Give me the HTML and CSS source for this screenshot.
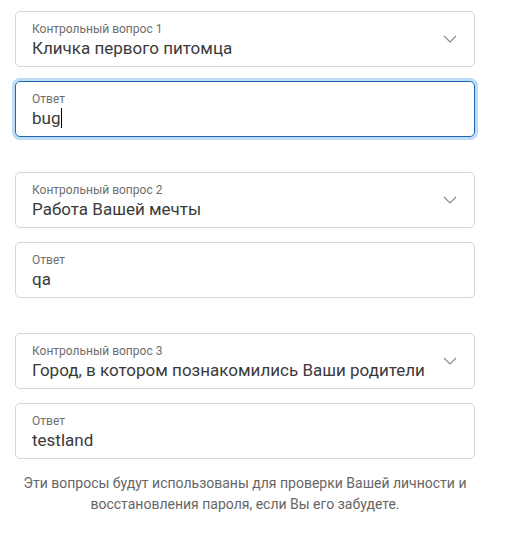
FILE: index.html
```html
<!DOCTYPE html>
<html lang="ru">
<head>
    <meta charset="UTF-8">
    <title>Контрольные вопросы</title>
    <link rel="stylesheet" href="styles.css">
</head>
<body>

<div class="form">
    <div class="group">
        <div class="field select">
            <div class="text">
                <div class="label">Контрольный вопрос 1</div>
                <div class="value">Кличка первого питомца</div>
            </div>
            <svg class="chevron" width="14" height="8" viewBox="0 0 14 8">
                <path d="M1 1 L7 7 L13 1" fill="none" stroke="#8a8a8a" stroke-width="1.2"/>
            </svg>
        </div>
        <div class="field focused">
            <div class="text">
                <div class="label">Ответ</div>
                <div class="value">bug<span class="caret"></span></div>
            </div>
        </div>
    </div>

    <div class="group">
        <div class="field select">
            <div class="text">
                <div class="label">Контрольный вопрос 2</div>
                <div class="value">Работа Вашей мечты</div>
            </div>
            <svg class="chevron" width="14" height="8" viewBox="0 0 14 8">
                <path d="M1 1 L7 7 L13 1" fill="none" stroke="#8a8a8a" stroke-width="1.2"/>
            </svg>
        </div>
        <div class="field">
            <div class="text">
                <div class="label">Ответ</div>
                <div class="value">qa</div>
            </div>
        </div>
    </div>

    <div class="group">
        <div class="field select">
            <div class="text">
                <div class="label">Контрольный вопрос 3</div>
                <div class="value">Город, в котором познакомились Ваши родители</div>
            </div>
            <svg class="chevron" width="14" height="8" viewBox="0 0 14 8">
                <path d="M1 1 L7 7 L13 1" fill="none" stroke="#8a8a8a" stroke-width="1.2"/>
            </svg>
        </div>
        <div class="field">
            <div class="text">
                <div class="label">Ответ</div>
                <div class="value">testland</div>
            </div>
        </div>
    </div>

    <p class="note">Эти вопросы будут использованы для проверки Вашей личности и восстановления пароля, если Вы его забудете.</p>
</div>

</body>
</html>
```

FILE: styles.css
```css
* {
    margin: 0;
    padding: 0;
    box-sizing: border-box;
}

body {
    background: #ffffff;
    font-family: Roboto, "Noto Sans", sans-serif;
    color: #333333;
}

.form {
    width: 460px;
    margin-left: 15px;
    padding-top: 11px;
}

.group {
    display: flex;
    flex-direction: column;
    gap: 14px;
    margin-bottom: 35px;
}

.group:last-of-type {
    margin-bottom: 0;
}

.field {
    height: 56px;
    border: 1px solid #d6d6d6;
    border-radius: 5px;
    padding: 9px 16px 0 16px;
    display: flex;
    align-items: center;
}

.field .text {
    flex: 1;
    align-self: flex-start;
}

.field.focused {
    border-color: #1d65b0;
    box-shadow: 0 0 0 3px #bcdcf7;
}

.label {
    font-size: 12px;
    line-height: 16px;
    color: #6e6e6e;
}

.value {
    font-size: 17px;
    line-height: 22px;
    color: #3a3a3a;
    white-space: nowrap;
}

.caret {
    display: inline-block;
    width: 1px;
    height: 20px;
    background: #000000;
    vertical-align: -4px;
    margin-left: 1px;
}

.chevron {
    margin-top: -9px;
    margin-right: 1px;
}

.note {
    margin-top: 14px;
    text-align: center;
    font-size: 14px;
    line-height: 21px;
    color: #666666;
}
```
